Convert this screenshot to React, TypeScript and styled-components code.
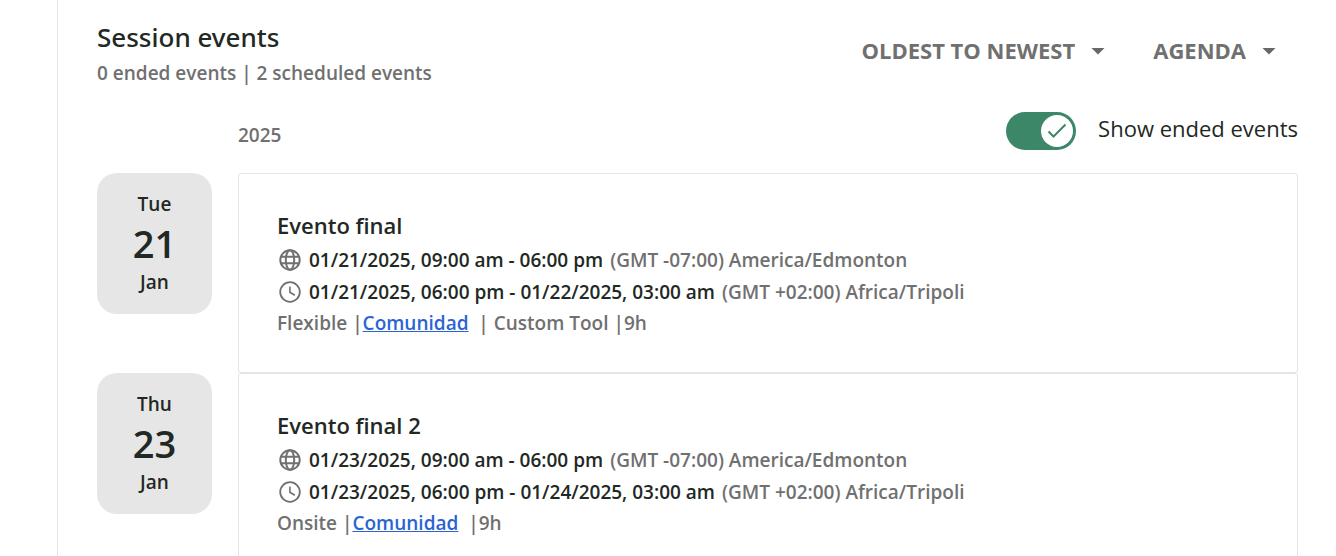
import React, { useState } from "react";
import styled, { createGlobalStyle } from "styled-components";

const ink = "#222823";
const muted = "#707070";
const line = "#e5e5e5";

const GlobalStyle = createGlobalStyle`
  * { box-sizing: border-box; }
  body {
    margin: 0;
    background: #fff;
    color: ${ink};
    font-family: "Open Sans", "Noto Sans", sans-serif;
    font-size: 19px;
    font-weight: 600;
    line-height: 32px;
  }
`;

const Panel = styled.main`
  margin-left: 57px;
  min-height: 100vh;
  border-left: 1px solid ${line};
  padding: 20px 38px 0 39px;
`;

const Header = styled.header`
  display: flex;
  justify-content: space-between;
  align-items: flex-start;
`;

const Title = styled.h1`
  margin: 0;
  font-family: "Noto Sans", "Open Sans", sans-serif;
  font-size: 26px;
  font-weight: 500;
  line-height: 34px;
`;

const Summary = styled.p`
  margin: 0;
  color: ${muted};
  line-height: 38px;
`;

const Filters = styled.div`
  display: flex;
  gap: 48px;
  padding: 13px 22px 0 0;
`;

const Dropdown = styled.label`
  display: flex;
  align-items: center;
  gap: 16px;

  svg { margin-top: 2px; }
`;

const Select = styled.select`
  appearance: none;
  field-sizing: content;
  border: 0;
  padding: 0;
  background: none;
  color: ${muted};
  font: inherit;
  font-size: 22px;
  font-weight: 700;
  line-height: 34px;
  cursor: pointer;
`;

const Toolbar = styled.div`
  display: grid;
  grid-template-columns: 115px 1fr auto;
  column-gap: 26px;
  align-items: center;
  height: 38px;
  margin: 20px 0 23px;
`;

const Year = styled.h2`
  grid-column: 2;
  margin: 0;
  padding-top: 6px;
  color: ${muted};
  font-size: 19px;
  font-weight: 600;
  line-height: 32px;
`;

const ToggleLabel = styled.label`
  display: flex;
  align-items: center;
  gap: 22px;
  margin-bottom: 2px;
  font-size: 22px;
  font-weight: 400;
  line-height: 32px;
  cursor: pointer;
`;

const ToggleText = styled.span`
  padding-bottom: 6px;
`;

const Track = styled.span<{ $on: boolean }>`
  display: flex;
  justify-content: ${(p) => (p.$on ? "flex-end" : "flex-start")};
  width: 70px;
  height: 38px;
  padding: 3px;
  border-radius: 19px;
  background: ${(p) => (p.$on ? "#3c8768" : "#8a8a8a")};
`;

const Knob = styled.span`
  display: grid;
  place-items: center;
  width: 32px;
  height: 32px;
  border-radius: 50%;
  background: #fff;
`;

const HiddenCheckbox = styled.input`
  position: absolute;
  opacity: 0;
  width: 70px;
  height: 38px;
  margin: 0;
`;

const EventList = styled.ul`
  margin: 0;
  padding: 0;
  list-style: none;
`;

const EventRow = styled.li`
  display: grid;
  grid-template-columns: 115px 1fr;
  column-gap: 26px;
  align-items: start;
`;

const DateBadge = styled.time`
  display: flex;
  flex-direction: column;
  align-items: center;
  padding: 15px 0 16px;
  border-radius: 20px;
  background: #e6e6e6;
`;

const Day = styled.strong`
  font-size: 38px;
  font-weight: 600;
  line-height: 46px;
`;

const Card = styled.article`
  padding: 34px 38px;
  border: 1px solid ${line};
  border-radius: 3px;
`;

const EventTitle = styled.h3`
  margin: 0;
  font-size: 22px;
  font-weight: 600;
  line-height: 34px;
`;

const TimeLine = styled.p`
  display: flex;
  align-items: center;
  margin: 0;
  line-height: 32px;

  &:first-of-type { margin-top: 2px; }

  svg { margin-right: 7px; }
`;

const Zone = styled.span`
  margin-left: 7px;
  color: ${muted};
`;

const Details = styled.p`
  margin: 0;
  color: ${muted};
  line-height: 30px;
  white-space: pre;
`;

const Link = styled.a`
  color: #2a64d4;
  text-decoration: underline;
`;

const Caret = () => (
  <svg width="14" height="7" viewBox="0 0 14 7" aria-hidden="true">
    <path d="M0.5 0H13.5L7 6.5Z" fill="#686868" />
  </svg>
);

const Check = () => (
  <svg width="20" height="16" viewBox="0 0 20 16" fill="none" aria-hidden="true">
    <path d="M1.5 8.5L6.5 13.5L18.5 1.5" stroke="#3c8768" strokeWidth="2" />
  </svg>
);

const Globe = () => (
  <svg width="25" height="24" viewBox="0 0 25 24" fill="none" stroke="#707070" strokeWidth="2" aria-hidden="true">
    <circle cx="13" cy="12" r="9.7" />
    <ellipse cx="13" cy="12" rx="4.2" ry="9.7" />
    <path d="M3.6 8.8H22.4M3.6 15.2H22.4" />
  </svg>
);

const Clock = () => (
  <svg width="25" height="24" viewBox="0 0 25 24" fill="none" stroke="#707070" strokeWidth="1.8" aria-hidden="true">
    <circle cx="13" cy="12" r="9.8" />
    <path d="M12.9 6.5V12.3L17.8 15.3" strokeWidth="1.6" />
  </svg>
);

interface SessionEvent {
  iso: string;
  weekday: string;
  day: string;
  month: string;
  title: string;
  local: string;
  remote: string;
  before: string;
  after: string;
}

const events: SessionEvent[] = [
  {
    iso: "2025-01-21",
    weekday: "Tue",
    day: "21",
    month: "Jan",
    title: "Evento final",
    local: "01/21/2025, 09:00 am - 06:00 pm",
    remote: "01/21/2025, 06:00 pm - 01/22/2025, 03:00 am",
    before: "Flexible |",
    after: "  | Custom Tool |9h",
  },
  {
    iso: "2025-01-23",
    weekday: "Thu",
    day: "23",
    month: "Jan",
    title: "Evento final 2",
    local: "01/23/2025, 09:00 am - 06:00 pm",
    remote: "01/23/2025, 06:00 pm - 01/24/2025, 03:00 am",
    before: "Onsite |",
    after: "  |9h",
  },
];

export default function App() {
  const [showEnded, setShowEnded] = useState(true);
  return (
    <>
      <GlobalStyle />
      <Panel>
        <Header>
          <div>
            <Title>Session events</Title>
            <Summary>0 ended events | 2 scheduled events</Summary>
          </div>
          <Filters>
            <Dropdown>
              <Select aria-label="Sort order">
                <option>OLDEST TO NEWEST</option>
              </Select>
              <Caret />
            </Dropdown>
            <Dropdown>
              <Select aria-label="View">
                <option>AGENDA</option>
              </Select>
              <Caret />
            </Dropdown>
          </Filters>
        </Header>
        <Toolbar>
          <Year>2025</Year>
          <ToggleLabel>
            <HiddenCheckbox
              type="checkbox"
              checked={showEnded}
              onChange={(e) => setShowEnded(e.target.checked)}
            />
            <Track $on={showEnded}>
              <Knob>{showEnded && <Check />}</Knob>
            </Track>
            <ToggleText>Show ended events</ToggleText>
          </ToggleLabel>
        </Toolbar>
        <EventList>
          {events.map((event) => (
            <EventRow key={event.iso}>
              <DateBadge dateTime={event.iso}>
                <span>{event.weekday}</span>
                <Day>{event.day}</Day>
                <span>{event.month}</span>
              </DateBadge>
              <Card>
                <EventTitle>{event.title}</EventTitle>
                <TimeLine>
                  <Globe />
                  {event.local}
                  <Zone>(GMT -07:00) America/Edmonton</Zone>
                </TimeLine>
                <TimeLine>
                  <Clock />
                  {event.remote}
                  <Zone>(GMT +02:00) Africa/Tripoli</Zone>
                </TimeLine>
                <Details>
                  {event.before}
                  <Link href="#comunidad">Comunidad</Link>
                  {event.after}
                </Details>
              </Card>
            </EventRow>
          ))}
        </EventList>
      </Panel>
    </>
  );
}
